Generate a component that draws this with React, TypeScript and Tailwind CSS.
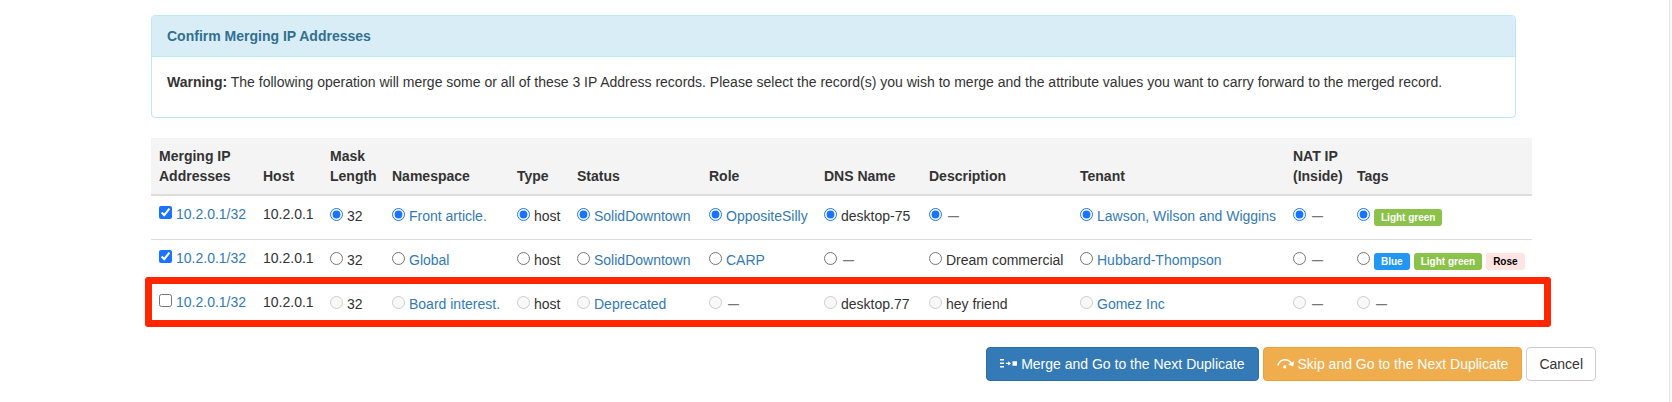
import type { ReactNode } from "react";

type Tag = { name: string; className: string };
type Cell = { text: string; link?: boolean } | null;
type Row = { address: string; host: string; selected: boolean; chosen: boolean; cells: Cell[]; tags: Tag[] };

const BLUE: Tag = { name: "Blue", className: "bg-[#2196f3] text-white" };
const GREEN: Tag = { name: "Light green", className: "bg-[#8bc34a] text-white" };
const ROSE: Tag = { name: "Rose", className: "bg-[#ffe4e1] text-black" };

const columns: { title: string; width: string }[] = [
  { title: "Merging IP Addresses", width: "w-[104px]" },
  { title: "Host", width: "w-[67px]" },
  { title: "Mask Length", width: "w-[62px]" },
  { title: "Namespace", width: "w-[125px]" },
  { title: "Type", width: "w-[60px]" },
  { title: "Status", width: "w-[132px]" },
  { title: "Role", width: "w-[115px]" },
  { title: "DNS Name", width: "w-[105px]" },
  { title: "Description", width: "w-[151px]" },
  { title: "Tenant", width: "w-[213px]" },
  { title: "NAT IP (Inside)", width: "w-[64px]" },
  { title: "Tags", width: "w-[183px]" },
];

const rows: Row[] = [
  {
    address: "10.2.0.1/32", host: "10.2.0.1", selected: true, chosen: true,
    cells: [
      { text: "32" }, { text: "Front article.", link: true }, { text: "host" },
      { text: "SolidDowntown", link: true }, { text: "OppositeSilly", link: true },
      { text: "desktop-75" }, null, { text: "Lawson, Wilson and Wiggins", link: true }, null,
    ],
    tags: [GREEN],
  },
  {
    address: "10.2.0.1/32", host: "10.2.0.1", selected: true, chosen: false,
    cells: [
      { text: "32" }, { text: "Global", link: true }, { text: "host" },
      { text: "SolidDowntown", link: true }, { text: "CARP", link: true },
      null, { text: "Dream commercial" }, { text: "Hubbard-Thompson", link: true }, null,
    ],
    tags: [BLUE, GREEN, ROSE],
  },
  {
    address: "10.2.0.1/32", host: "10.2.0.1", selected: false, chosen: false,
    cells: [
      { text: "32" }, { text: "Board interest.", link: true }, { text: "host" },
      { text: "Deprecated", link: true }, null,
      { text: "desktop.77" }, { text: "hey friend" }, { text: "Gomez Inc", link: true }, null,
    ],
    tags: [],
  },
];

function Choice({ id, column, row, children }: { id: string; column: string; row: Row; children: ReactNode }) {
  return (
    <div className="flex h-5 gap-1">
      <input
        id={id}
        type="radio"
        name={column}
        aria-label={column}
        defaultChecked={row.chosen}
        disabled={!row.selected}
        className="mt-0.5 size-[13px] shrink-0 accent-[#1a73ff]"
      />
      {children}
    </div>
  );
}

function Dash({ id }: { id: string }) {
  return <label htmlFor={id} className="pl-0.5 text-[11px] font-bold text-[#777777]">—</label>;
}

function MergeIcon() {
  return (
    <svg aria-hidden="true" viewBox="0 0 17 12" className="h-3 w-[17px]" fill="currentColor">
      <path d="M0 1h4v1.600H0zM0 4.500h4v1.600H0zM0 8h4v1.600H0zM12.500 3.200h4.500v4.600h-4.500zM6 4.700h2.200V3.200L11 5.400 8.200 7.600V6.100H6z" />
    </svg>
  );
}

function SkipIcon() {
  return (
    <svg aria-hidden="true" viewBox="0 0 17 12" className="h-3 w-[17px]" fill="none">
      <path d="M.8 7.600C2.300 3.600 4.800 1.700 7.800 1.700c3 0 5.400 1.500 6.800 3.800" stroke="currentColor" strokeWidth="1.500" />
      <path d="M17 3.200 16.300 8.600 11.200 6.600z" fill="currentColor" />
      <circle cx="7.800" cy="8.800" r="1.600" fill="currentColor" />
    </svg>
  );
}

export default function App() {
  return (
    <div className="flex min-h-screen bg-[#fafafa] font-['Liberation_Sans',Arial,sans-serif] text-sm leading-5 text-[#333333]">
      <main className="mr-0.5 min-w-0 grow border-r border-[#e7e7e7] bg-white pt-[15px] pr-[73px] pb-5 pl-[151px]">
        <section className="mr-20 rounded border border-[#bce8f1]">
          <h1 className="rounded-t-[3px] border-b border-[#bce8f1] bg-[#d9edf7] px-[15px] py-2.5 font-bold text-[#31708f]">
            Confirm Merging IP Addresses
          </h1>
          <p className="px-[15px] pt-[15px] pb-[25px]">
            <strong>Warning:</strong> The following operation will merge some or all of these 3 IP Address records. Please
            select the record(s) you wish to merge and the attribute values you want to carry forward to the merged record.
          </p>
        </section>

        <div className="relative mt-5 mr-16">
          <table className="w-full table-fixed border-separate border-spacing-0 text-left">
            <thead>
              <tr className="bg-[#f4f4f4]">
                {columns.map((c) => (
                  <th key={c.title} scope="col" className={`${c.width} border-b-2 border-[#dddddd] py-2 pl-2 align-bottom font-bold`}>
                    {c.title}
                  </th>
                ))}
              </tr>
            </thead>
            <tbody>
              {rows.map((row, r) => {
                const edge = r === 0 ? "h-[43px]" : "h-11 border-t border-[#dddddd]";
                return (
                  <tr key={r} className="align-top whitespace-nowrap">
                    <td className={`${edge} pt-2 pl-2`}>
                      <div className="flex h-5 gap-1">
                        <input
                          type="checkbox"
                          aria-label={`Merge ${row.address}`}
                          defaultChecked={row.selected}
                          className="mt-0.5 size-[13px] shrink-0 accent-[#1a73ff]"
                        />
                        <a href="#" className="text-[#337ab7]">{row.address}</a>
                      </div>
                    </td>
                    <td className={`${edge} pt-2 pl-2`}>{row.host}</td>
                    {row.cells.map((cell, i) => {
                      const column = columns[i + 2].title;
                      const id = `choice-${r}-${i}`;
                      return (
                        <td key={i} className={`${edge} pt-2.5 pl-2`}>
                          <Choice id={id} column={column} row={row}>
                            {!cell ? <Dash id={id} /> : cell.link ? (
                              <a href="#" className="text-[#337ab7]">{cell.text}</a>
                            ) : (
                              <label htmlFor={id}>{cell.text}</label>
                            )}
                          </Choice>
                        </td>
                      );
                    })}
                    <td className={`${edge} pt-2.5 pl-2`}>
                      <Choice id={`tags-${r}`} column="Tags" row={row}>
                        {row.tags.length === 0 ? <Dash id={`tags-${r}`} /> : (
                          <label htmlFor={`tags-${r}`} className="flex gap-1 pt-[3px]">
                            {row.tags.map((tag) => (
                              <span
                                key={tag.name}
                                className={`${tag.className} h-[17px] rounded-[3px] px-[7px] text-[10px] leading-[17px] font-bold`}
                              >
                                {tag.name}
                              </span>
                            ))}
                          </label>
                        )}
                      </Choice>
                    </td>
                  </tr>
                );
              })}
            </tbody>
          </table>
          <div className="pointer-events-none absolute -right-[19px] bottom-0 -left-1.5 h-[50px] rounded-[3px] border-[7px] border-[#ff2600]" />
        </div>

        <div className="mt-5 flex justify-end gap-1 whitespace-nowrap">
          <button className="flex items-center gap-1 rounded border border-[#2e6da4] bg-[#337ab7] px-[13px] py-1.5 text-white">
            <MergeIcon />
            Merge and Go to the Next Duplicate
          </button>
          <button className="flex items-center gap-1 rounded border border-[#eea236] bg-[#f0ad4e] px-[13px] py-1.5 text-white">
            <SkipIcon />
            Skip and Go to the Next Duplicate
          </button>
          <button className="rounded border border-[#cccccc] bg-white px-3 py-1.5">Cancel</button>
        </div>
      </main>
    </div>
  );
}
